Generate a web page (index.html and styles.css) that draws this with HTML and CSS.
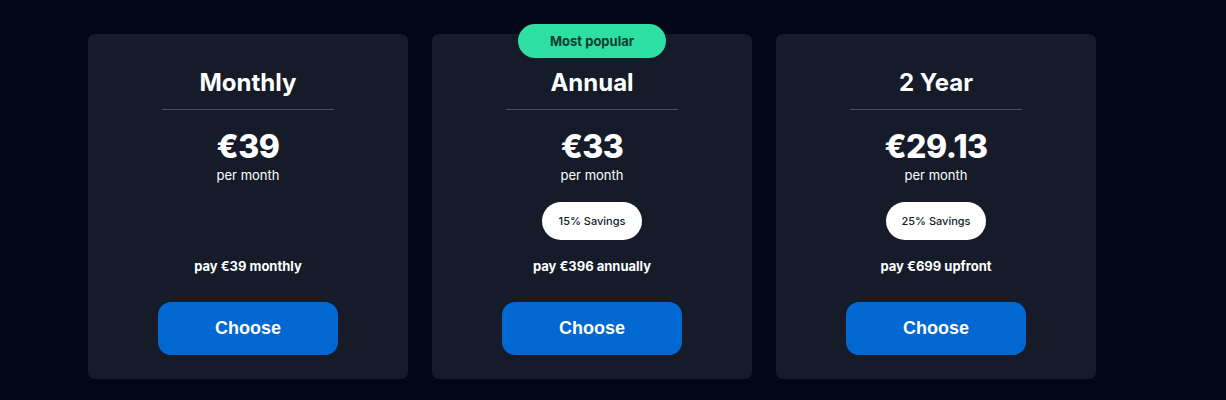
FILE: index.html
```html
<!DOCTYPE html>
<html>
<head>
<meta charset="utf-8">
<link rel="stylesheet" href="styles.css">
</head>
<body>
<div class="plans">
  <div class="card">
    <h2 class="title">Monthly</h2>
    <div class="divider"></div>
    <div class="price">€39</div>
    <div class="per">per month</div>
    <div class="pill pill-hidden">0% Savings</div>
    <div class="pay">pay €39 monthly</div>
    <button class="choose">Choose</button>
  </div>
  <div class="card">
    <div class="badge">Most popular</div>
    <h2 class="title">Annual</h2>
    <div class="divider"></div>
    <div class="price">€33</div>
    <div class="per">per month</div>
    <div class="pill">15% Savings</div>
    <div class="pay">pay €396 annually</div>
    <button class="choose">Choose</button>
  </div>
  <div class="card">
    <h2 class="title">2 Year</h2>
    <div class="divider"></div>
    <div class="price">€29.13</div>
    <div class="per">per month</div>
    <div class="pill">25% Savings</div>
    <div class="pay">pay €699 upfront</div>
    <button class="choose">Choose</button>
  </div>
</div>
</body>
</html>
```
FILE: styles.css
```css
* { box-sizing: border-box; }
body {
  margin: 0;
  background: #020617;
  font-family: "Inter", "Liberation Sans", sans-serif;
  color: #ffffff;
}
.plans {
  display: flex;
  gap: 24px;
  padding: 34px 0 0 88px;
}
.card {
  position: relative;
  width: 320px;
  height: 345px;
  background: #151b29;
  border-radius: 7px;
  display: flex;
  flex-direction: column;
  align-items: center;
  padding-top: 33px;
}
.badge {
  position: absolute;
  top: -10px;
  left: 50%;
  transform: translateX(-50%);
  width: 148px;
  height: 34px;
  border-radius: 17px;
  background: #2ddfa3;
  color: #123a30;
  font-size: 13px;
  font-weight: 700;
  display: flex;
  align-items: center;
  justify-content: center;
}
.title {
  margin: 0;
  font-size: 24px;
  line-height: 31px;
  font-weight: 700;
}
.divider {
  width: 172px;
  height: 1px;
  background: #4b5263;
  margin-top: 11px;
}
.price {
  margin-top: 17px;
  font-size: 32px;
  line-height: 40px;
  font-weight: 800;
  letter-spacing: -0.5px;
}
.per {
  font-size: 13px;
  line-height: 16px;
}
.pill {
  margin-top: 19px;
  width: 100px;
  height: 38px;
  border-radius: 19px;
  background: #ffffff;
  color: #151b29;
  font-size: 11px;
  font-weight: 500;
  display: flex;
  align-items: center;
  justify-content: center;
}
.pill-hidden { visibility: hidden; }
.pay {
  margin-top: 18px;
  font-size: 13px;
  line-height: 16px;
  font-weight: 700;
}
.choose {
  margin-top: 28px;
  width: 180px;
  height: 53px;
  border: none;
  border-radius: 13px;
  background: #0068d0;
  color: #ffffff;
  font-family: "Liberation Sans", Arial, sans-serif;
  font-size: 18px;
  font-weight: 700;
  cursor: pointer;
}
```
